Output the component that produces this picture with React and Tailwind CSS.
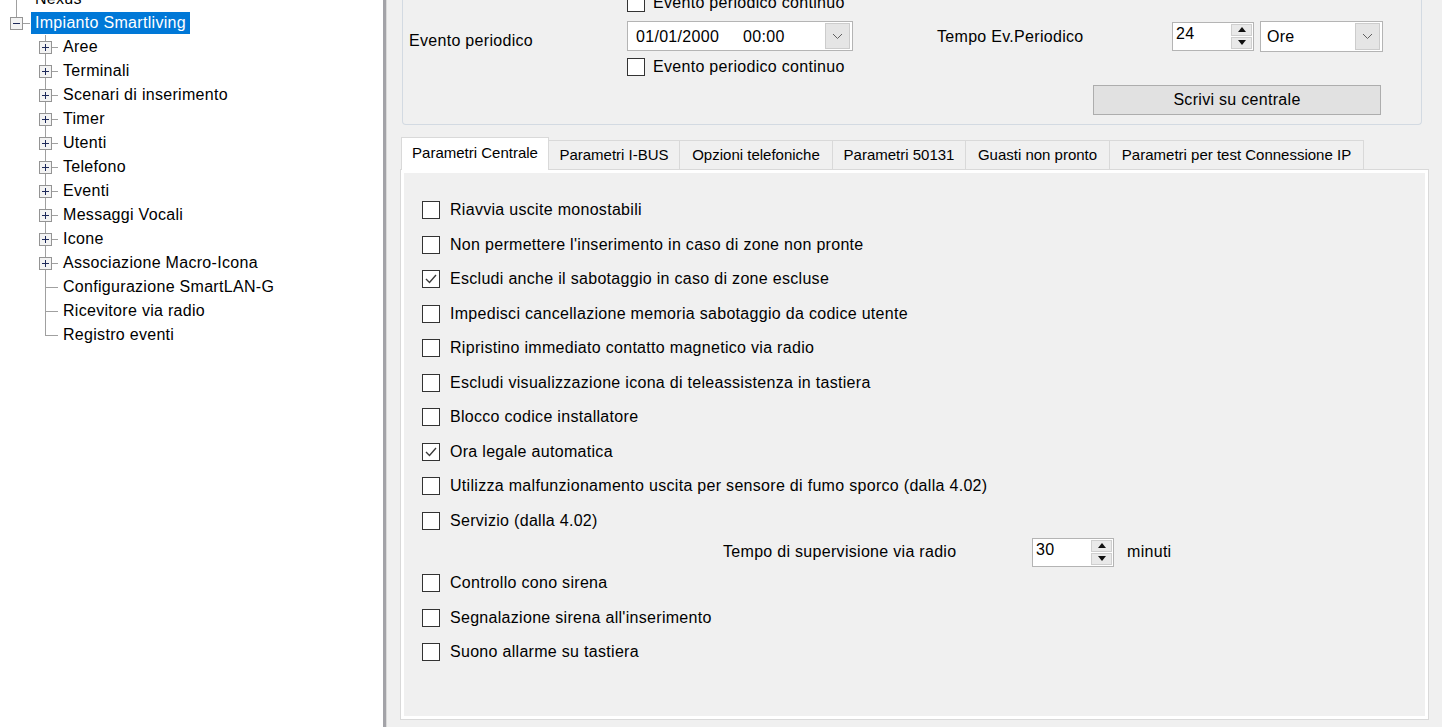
import React from 'react';

// tree data
const treeItems = [
  { label: 'Aree', exp: true },
  { label: 'Terminali', exp: true },
  { label: 'Scenari di inserimento', exp: true },
  { label: 'Timer', exp: true },
  { label: 'Utenti', exp: true },
  { label: 'Telefono', exp: true },
  { label: 'Eventi', exp: true },
  { label: 'Messaggi Vocali', exp: true },
  { label: 'Icone', exp: true },
  { label: 'Associazione Macro-Icona', exp: true },
  { label: 'Configurazione SmartLAN-G' },
  { label: 'Ricevitore via radio' },
  { label: 'Registro eventi', last: true },
];

const options = [
  { label: 'Riavvia uscite monostabili' },
  { label: "Non permettere l'inserimento in caso di zone non pronte" },
  { label: 'Escludi anche il sabotaggio in caso di zone escluse', checked: true },
  { label: 'Impedisci cancellazione memoria sabotaggio da codice utente' },
  { label: 'Ripristino immediato contatto magnetico via radio' },
  { label: 'Escludi visualizzazione icona di teleassistenza in tastiera' },
  { label: 'Blocco codice installatore' },
  { label: 'Ora legale automatica', checked: true },
  { label: 'Utilizza malfunzionamento uscita per sensore di fumo sporco (dalla 4.02)' },
  { label: 'Servizio (dalla 4.02)' },
];

const optionsBottom = [
  { label: 'Controllo cono sirena' },
  { label: "Segnalazione sirena all'inserimento" },
  { label: 'Suono allarme su tastiera' },
];

const tabs = [
  { label: 'Parametri Centrale', w: 'w-[148px]', active: true },
  { label: 'Parametri I-BUS', w: 'w-[131px]' },
  { label: 'Opzioni telefoniche', w: 'w-[153px]' },
  { label: 'Parametri 50131', w: 'w-[133px]' },
  { label: 'Guasti non pronto', w: 'w-[144px]' },
  { label: 'Parametri per test Connessione IP', w: 'w-[254px]' },
];

// expander box drawn in the tree gutter
const ExpandBox = ({ x, plus }) => (
  <g>
    <rect x={x + 0.5} y={6.5} width={12} height={12} fill="#f3f3f3" stroke="#949494" />
    <line x1={x + 3} y1={12.5} x2={x + 10} y2={12.5} stroke="#1e2a5a" />
    {plus && <line x1={x + 6.5} y1={9} x2={x + 6.5} y2={16} stroke="#1e2a5a" />}
  </g>
);

const TreeRow = ({ gutter, label, selected }) => (
  <div className="flex items-center h-[24px]">
    {gutter}
    <span
      className={`h-[22px] leading-[22px] px-[4px] whitespace-nowrap ${
        selected ? 'bg-[#0078d7] text-white' : 'text-black'
      }`}
    >
      {label}
    </span>
  </div>
);

const Tree = () => (
  <div className="-mt-[13px]">
    <TreeRow
      label="Nexus"
      gutter={
        <svg width="31" height="24" className="shrink-0">
          <line x1="16.5" y1="0" x2="16.5" y2="24" stroke="#a0a0a0" />
          <line x1="16" y1="12.5" x2="30" y2="12.5" stroke="#a0a0a0" />
        </svg>
      }
    />
    <TreeRow
      label="Impianto Smartliving"
      selected
      gutter={
        <svg width="31" height="24" className="shrink-0">
          <line x1="16.5" y1="0" x2="16.5" y2="6" stroke="#a0a0a0" />
          <line x1="23" y1="12.5" x2="30" y2="12.5" stroke="#a0a0a0" />
          <ExpandBox x={10} />
        </svg>
      }
    />
    {treeItems.map((it) => (
      <TreeRow
        key={it.label}
        label={it.label}
        gutter={
          <svg width="59" height="24" className="shrink-0">
            {it.exp ? (
              <>
                <line x1="45.5" y1="0" x2="45.5" y2="6" stroke="#a0a0a0" />
                <line x1="45.5" y1="19" x2="45.5" y2="24" stroke="#a0a0a0" />
                <line x1="52" y1="12.5" x2="58" y2="12.5" stroke="#a0a0a0" />
                <ExpandBox x={39} plus />
              </>
            ) : (
              <>
                <line x1="45.5" y1="0" x2="45.5" y2={it.last ? 12.5 : 24} stroke="#a0a0a0" />
                <line x1="45" y1="12.5" x2="58" y2="12.5" stroke="#a0a0a0" />
              </>
            )}
          </svg>
        }
      />
    ))}
  </div>
);

const CheckBox = ({ checked }) => (
  <span className="w-[18px] h-[18px] shrink-0 border border-[#333333] bg-white flex items-center justify-center">
    {checked && (
      <svg width="14" height="14" viewBox="0 0 14 14">
        <polyline points="2,7 5.5,10.5 12,3" fill="none" stroke="#3a3a3a" strokeWidth="1.4" />
      </svg>
    )}
  </span>
);

const Chevron = () => (
  <svg width="11" height="7" viewBox="0 0 11 7">
    <polyline points="1,1 5.5,5.5 10,1" fill="none" stroke="#606060" strokeWidth="1" />
  </svg>
);

const DropButton = ({ className }) => (
  <span className={`flex items-center justify-center bg-[#e5e5e5] border border-[#cccccc] ${className}`}>
    <Chevron />
  </span>
);

const Arrow = ({ up }) => (
  <svg width="8" height="5" viewBox="0 0 8 5">
    <polygon points={up ? '0,5 8,5 4,0' : '0,0 8,0 4,5'} fill="#111111" />
  </svg>
);

const Spinner = ({ value, className }) => (
  <div className={`flex bg-white border border-[#b4b4b4] ${className}`}>
    <span className="flex-1 pl-[3px] pt-[1px] leading-[20px]">{value}</span>
    <div className="flex flex-col w-[21px] my-[1px] mr-[1px] gap-[1px]">
      <span className="flex-1 flex items-center justify-center bg-[#e9e9e9] border border-[#cfcfcf]">
        <Arrow up />
      </span>
      <span className="flex-1 flex items-center justify-center bg-[#e9e9e9] border border-[#cfcfcf]">
        <Arrow />
      </span>
    </div>
  </div>
);

const GroupBox = () => (
  <div className="flex flex-col ml-[2px] mr-[7px] h-[125px] border-x border-b border-[#d3dae2] rounded-b-[4px]">
    <div className="flex items-center gap-[8px] h-[18px] -mt-[6px] pl-[224px] shrink-0">
      <CheckBox />
      <span>Evento periodico continuo</span>
    </div>

    <div className="flex items-center h-[30px] mt-[9px] shrink-0">
      <span className="w-[224px] pl-[6px] mt-[9px] shrink-0">Evento periodico</span>
      <div className="flex items-center w-[226px] h-[30px] bg-white border border-[#b4b4b4] shrink-0">
        <span className="flex-1 flex gap-[24px] pl-[8px] pt-[1px]">
          <span>01/01/2000</span>
          <span>00:00</span>
        </span>
        <DropButton className="w-[25px] h-[26px] mr-[2px]" />
      </div>
      <span className="ml-[84px] w-[235px] shrink-0 pt-[1px]">Tempo Ev.Periodico</span>
      <Spinner value="24" className="w-[82px] h-[29px] shrink-0" />
      <div className="flex items-center ml-[6px] w-[123px] h-[31px] bg-white border border-[#b4b4b4] shrink-0">
        <span className="flex-1 pl-[6px] pt-[1px]">Ore</span>
        <DropButton className="w-[25px] h-[27px] mr-[2px]" />
      </div>
    </div>

    <div className="flex items-center gap-[8px] h-[18px] mt-[7px] pl-[224px] shrink-0">
      <CheckBox />
      <span>Evento periodico continuo</span>
    </div>

    <button className="self-start mt-[9px] ml-[690px] w-[288px] h-[30px] shrink-0 bg-[#e1e1e1] border border-[#adadad] text-center">
      Scrivi su centrale
    </button>
  </div>
);

const OptionRow = ({ label, checked }) => (
  <div className="flex items-center gap-[10px] h-[34.5px] pl-[18px]">
    <CheckBox checked={checked} />
    <span className="whitespace-nowrap">{label}</span>
  </div>
);

const TabControl = () => (
  <div className="mt-[12px]">
    <div className="flex items-end h-[32px] pl-[1px] text-[15px] tracking-normal">
      {tabs.map((t) =>
        t.active ? (
          <div
            key={t.label}
            className={`${t.w} h-[33px] -mb-[1px] relative z-10 bg-white border-x border-t border-[#d9d9d9] flex items-center justify-center pb-[2px]`}
          >
            {t.label}
          </div>
        ) : (
          <div
            key={t.label}
            className={`${t.w} h-[29px] bg-[#f0f0f0] border-t border-r border-[#d9d9d9] flex items-center justify-center`}
          >
            {t.label}
          </div>
        )
      )}
    </div>
    <div className="h-[551px] border border-[#d9d9d9] bg-white p-[3px]">
      <div className="h-full bg-[#f0f0f0] pt-[20px]">
        {options.map((o) => (
          <OptionRow key={o.label} {...o} />
        ))}
        <div className="flex items-center h-[28px]">
          <span className="ml-[319px] w-[309px] shrink-0">Tempo di supervisione via radio</span>
          <Spinner value="30" className="w-[82px] h-[29px] shrink-0" />
          <span className="ml-[13px]">minuti</span>
        </div>
        {optionsBottom.map((o) => (
          <OptionRow key={o.label} {...o} />
        ))}
      </div>
    </div>
  </div>
);

export default function App() {
  return (
    <div className="flex w-[1442px] h-[727px] overflow-hidden text-[16px] tracking-[0.3px] text-black font-['Liberation_Sans',Arial,sans-serif] bg-[#f0f0f0]">
      {/* Tree panel */}
      <div className="w-[383px] shrink-0 bg-white overflow-hidden">
        <Tree />
      </div>

      {/* Splitter */}
      <div className="w-[3px] shrink-0 bg-[#a3a3a8]" />
      <div className="w-[1px] shrink-0 bg-[#d9d9d9]" />

      {/* Main area */}
      <div className="flex-1 pl-[13px] pr-[13px] overflow-hidden">
        <GroupBox />
        <TabControl />
      </div>
    </div>
  );
}
